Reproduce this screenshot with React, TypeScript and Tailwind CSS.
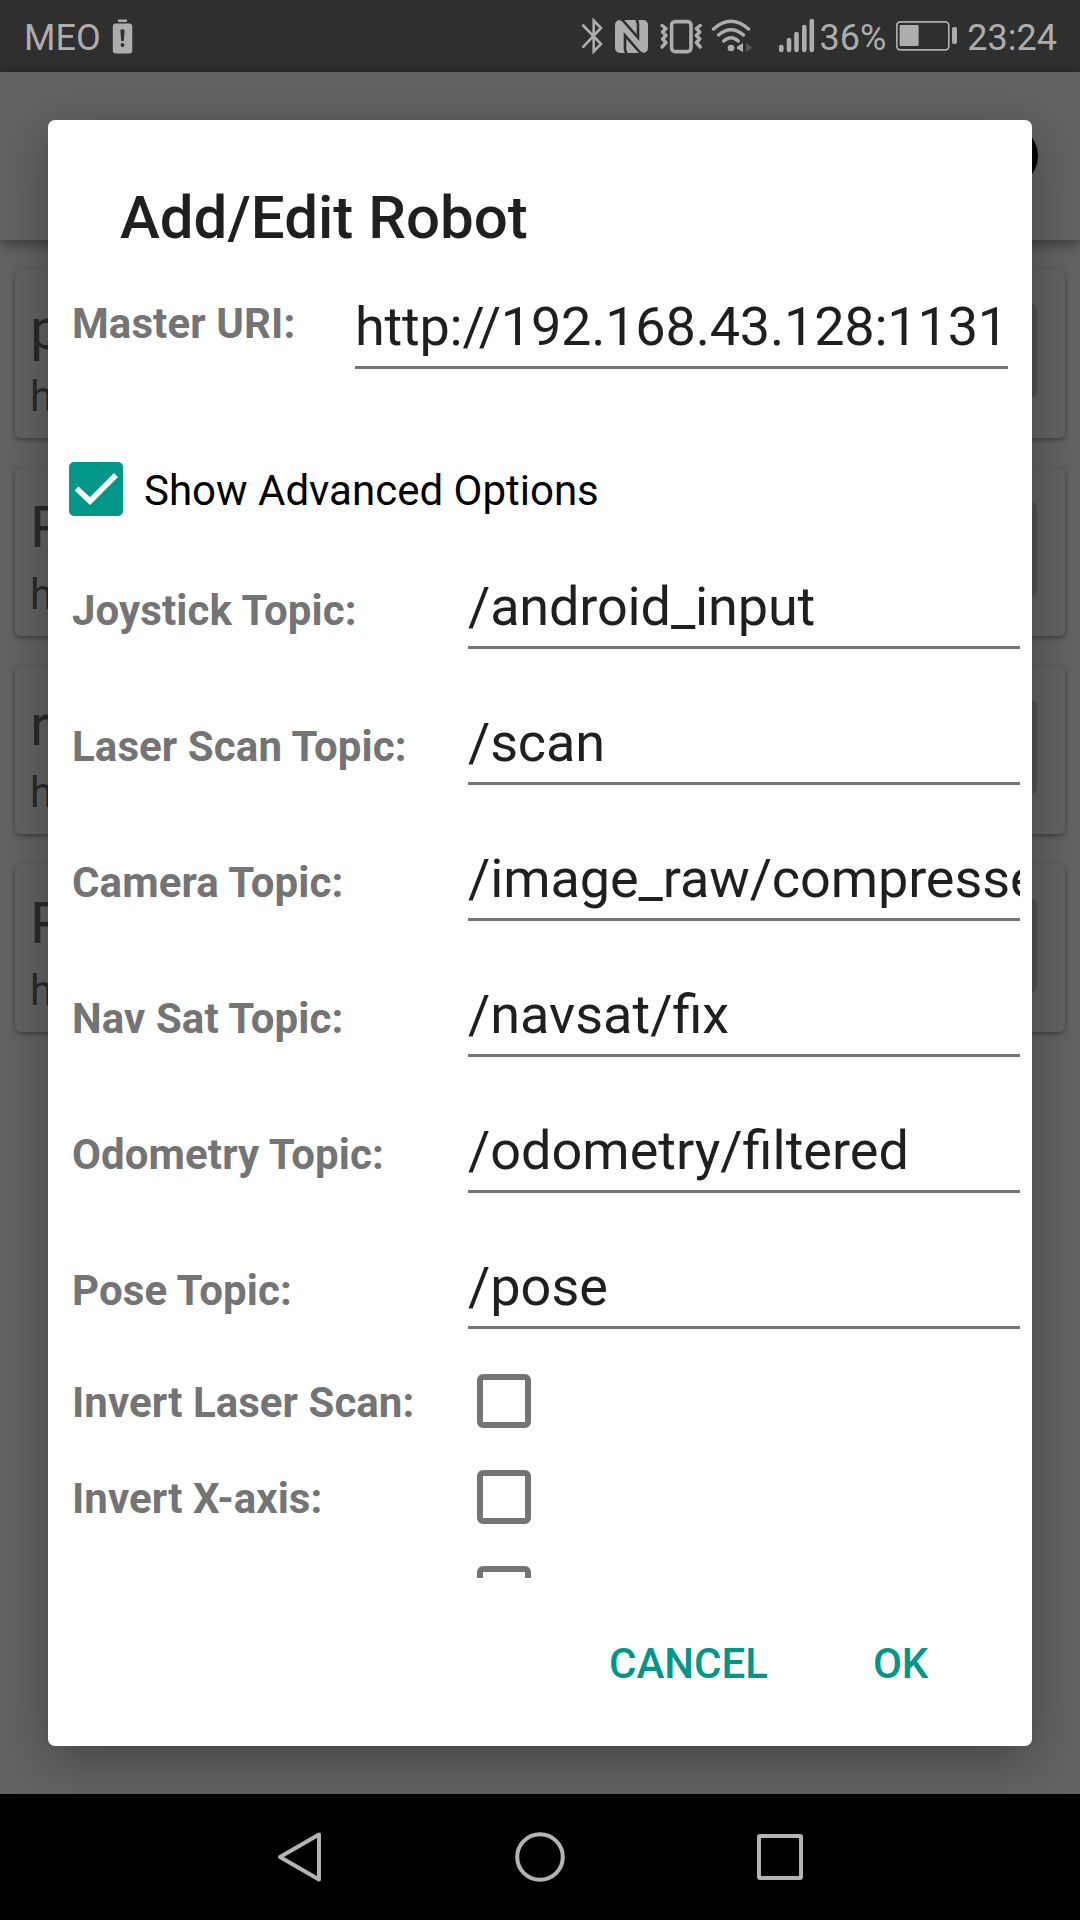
import React from "react";

const INK = "#adadad";

const robots = ["p", "R", "r", "R"];

const topics = [
  { label: "Joystick Topic:", value: "/android_input", tracking: "tracking-[-0.15px]" },
  { label: "Laser Scan Topic:", value: "/scan", tracking: "tracking-[-0.15px]" },
  { label: "Camera Topic:", value: "/image_raw/compressed", tracking: "tracking-[-0.1px]" },
  { label: "Nav Sat Topic:", value: "/navsat/fix", tracking: "tracking-normal" },
  { label: "Odometry Topic:", value: "/odometry/filtered", tracking: "tracking-normal" },
  { label: "Pose Topic:", value: "/pose", tracking: "tracking-normal" },
];

function BatteryAlertIcon() {
  return (
    <svg width="22" height="36" viewBox="0 0 22 36" className="ml-[11px]">
      <rect x="6" y="1.5" width="9" height="2.5" fill={INK} />
      <rect x="0.8" y="5.5" width="19.5" height="30" rx="3" fill={INK} />
      <path d="M8.3 12 Q10.5 10.5 12.7 12 L11.7 23 H9.3Z" fill="#2f2f2f" />
      <circle cx="10.5" cy="27" r="1.9" fill="#2f2f2f" />
    </svg>
  );
}

function StatusIcons() {
  return (
    <svg width="236" height="36" viewBox="580 18 236 36" fill="none" stroke={INK}>
      <path d="M583.2 25.5 L601 44 L593.7 51.5 V20.5 L601 28 L583.2 46.8" strokeWidth="2.6" strokeLinecap="round" />
      <rect x="615" y="20" width="33" height="33" rx="5" fill={INK} stroke="none" />
      <path d="M620.5 20 H622.5 L638 37.5 V24.5 Q638 21 636 20 M642.5 53 H640.5 L625 35.5 V48.5 Q625 52 627 53" stroke="#2f2f2f" strokeWidth="2.6" />
      <rect x="671.6" y="21.6" width="19.4" height="30" rx="3.5" strokeWidth="3.6" />
      <path d="M662 25.5 L666 28.5 L662.5 32 L666 35.5 L662.5 39 L666 42.5 L662 47" strokeWidth="3.4" strokeLinejoin="round" strokeLinecap="round" />
      <path d="M700.3 25.5 L696.3 28.5 L699.8 32 L696.3 35.5 L699.8 39 L696.3 42.5 L700.3 47" strokeWidth="3.4" strokeLinejoin="round" strokeLinecap="round" />
      <path d="M713.5 29 Q731 13.5 748.5 29 M718.5 35 Q731 24.5 743.5 35 M723.8 41 Q731 34.5 738.2 41" strokeWidth="3.4" strokeLinecap="round" />
      <circle cx="731" cy="48" r="3.3" fill={INK} stroke="none" />
      <path d="M743 43 V52 L737 48.8 V46.8Z" fill={INK} stroke="none" />
      <path d="M746 43 V52 L751.5 48.8 V46.8Z" fill="#555555" stroke="none" />
      <path d="M781.3 47 V50 M789 40 V50 M796.5 34 V50 M804.3 27 V50 M811.8 21 V50" strokeWidth="4.6" strokeLinecap="round" />
    </svg>
  );
}

function BatteryIcon() {
  return (
    <svg width="62" height="32" viewBox="896 21 62 32" className="ml-[10px]">
      <rect x="896.8" y="22.8" width="52" height="28" rx="3.5" fill="none" stroke={INK} strokeWidth="1.7" />
      <rect x="899.6" y="26" width="19" height="21" rx="1" fill={INK} />
      <rect x="952" y="28" width="5" height="17" rx="2" fill={INK} />
    </svg>
  );
}

function StatusBar() {
  return (
    <header className="flex h-[72px] shrink-0 items-center bg-[#2f2f2f] pr-[23px] pl-[24px] text-[36px] leading-[42px] text-[#adadad]">
      <span className="pt-[4px]">MEO</span>
      <BatteryAlertIcon />
      <div className="ml-auto flex items-center">
        <StatusIcons />
        <span className="ml-[4px] pt-[4px]">36%</span>
        <BatteryIcon />
        <span className="ml-[9px] pt-[4px]">23:24</span>
      </div>
    </header>
  );
}

function RobotCard({ name }: { name: string }) {
  return (
    <div className="flex h-[168px] items-start justify-between rounded-[6px] bg-[#636363] pr-[28px] pl-[15px] shadow-[0_2px_5px_rgba(0,0,0,0.35)]">
      <div className="pt-[23px] text-[#2a2a2a]">
        <div className="text-[58px] leading-[72px]">{name}</div>
        <div className="mt-[4px] text-[42px] leading-[56px]">h</div>
      </div>
      <div className="mt-[34px] h-[94px] w-[94px] rounded-[6px] bg-[#525252]" />
    </div>
  );
}

function Field({ value }: { value: string }) {
  return (
    <div className="h-[80px] overflow-hidden border-b-[3px] border-[#747474] text-[54px] leading-[76px] whitespace-nowrap text-[#1f1f1f]">
      {value}
    </div>
  );
}

function EmptyBox() {
  return <div className="h-[54px] w-[54px] shrink-0 rounded-[6px] border-[6px] border-[#747474]" />;
}

function ToggleRow({ label }: { label: string }) {
  return (
    <div className="flex h-[96px] items-start">
      <div className="w-[405px] pt-[4px] leading-[50px] tracking-[0.05px]">{label}</div>
      <EmptyBox />
    </div>
  );
}

function Dialog() {
  return (
    <section className="absolute top-[120px] left-[48px] flex h-[1626px] w-[984px] flex-col rounded-[7px] bg-white shadow-[0_13px_52px_rgba(0,0,0,0.32)]">
      <h1 className="pt-[65px] pl-[72px] text-[60px] leading-[66px] font-medium text-[#1f1f1f]">Add/Edit Robot</h1>
      <div className="h-[1327px] overflow-hidden text-[42px] font-bold text-[#747474]">
        <div className="flex h-[118px] items-end pr-[24px] pl-[24px]">
          <div className="h-[70px] w-[283px] shrink-0 leading-[50px] tracking-[0.1px]">Master URI:</div>
          <div className="min-w-0 flex-1 font-normal tracking-[-0.2px]">
            <Field value="http://192.168.43.128:1131" />
          </div>
        </div>
        <div className="mt-[93px] flex h-[54px] items-center pl-[21px] font-normal text-black">
          <div className="h-[54px] w-[54px] rounded-[5px] bg-[#009688]">
            <svg width="54" height="54" viewBox="0 0 54 54" fill="none">
              <path d="M7.5 26.5 L21 39 L47 13" stroke="white" strokeWidth="5.6" />
            </svg>
          </div>
          <span className="ml-[21px] pt-[4px] leading-[50px]">Show Advanced Options</span>
        </div>
        <div className="flex flex-col gap-[56px] pt-[53px]">
          {topics.map((t) => (
            <div key={t.label} className="flex h-[80px] pr-[12px] pl-[24px]">
              <div className="w-[396px] pt-[17px] leading-[50px] tracking-[0.1px]">{t.label}</div>
              <div className={`min-w-0 flex-1 font-normal ${t.tracking}`}>
                <Field value={t.value} />
              </div>
            </div>
          ))}
        </div>
        <div className="pt-[45px] pl-[24px]">
          <ToggleRow label="Invert Laser Scan:" />
          <ToggleRow label="Invert X-axis:" />
          <ToggleRow label="" />
        </div>
      </div>
      <div className="flex gap-[105px] pt-[61px] pl-[561px] text-[42px] leading-[50px] font-medium text-[#009688]">
        <button>CANCEL</button>
        <button>OK</button>
      </div>
    </section>
  );
}

function NavBar() {
  return (
    <nav className="z-10 flex h-[126px] items-center justify-center gap-[180px] bg-black">
      <svg width="60" height="60" viewBox="0 0 60 60" fill="none" stroke="#b4b4b4" strokeWidth="4" strokeLinejoin="round">
        <path d="M10 30 L49 7.5 V52.5Z" />
      </svg>
      <svg width="60" height="60" viewBox="0 0 60 60" fill="none" stroke="#b4b4b4" strokeWidth="4">
        <circle cx="30" cy="30" r="22.8" />
      </svg>
      <svg width="60" height="60" viewBox="0 0 60 60" fill="none" stroke="#b4b4b4" strokeWidth="4" strokeLinejoin="round">
        <rect x="9" y="9" width="42" height="42" rx="1" />
      </svg>
    </nav>
  );
}

export default function App() {
  return (
    <div className="relative flex h-[1920px] w-[1080px] flex-col overflow-hidden bg-[#636363] font-['Roboto',sans-serif]">
      <StatusBar />
      <main className="flex-1">
        <div className="flex h-[168px] items-center justify-end bg-[#636363] pr-[42px] shadow-[0_4px_12px_rgba(0,0,0,0.4)]">
          <div className="h-[62px] w-[62px] rounded-full bg-black" />
        </div>
        <div className="flex flex-col gap-[30px] px-[15px] pt-[30px]">
          {robots.map((name, i) => (
            <RobotCard key={i} name={name} />
          ))}
        </div>
      </main>
      <Dialog />
      <NavBar />
    </div>
  );
}
